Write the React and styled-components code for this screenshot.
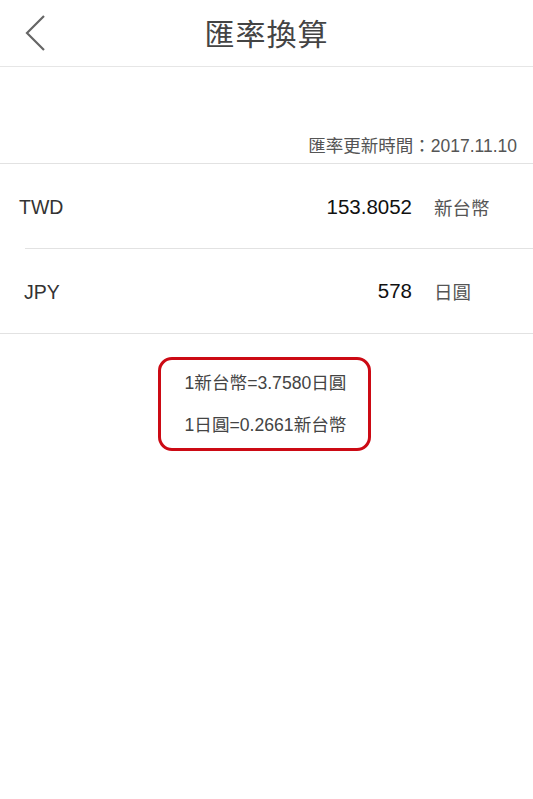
import React from "react";
import styled, { createGlobalStyle } from "styled-components";

const Global = createGlobalStyle`
  html, body { margin: 0; padding: 0; background: #fff; }
  body { font-family: "Liberation Sans", "Noto Sans CJK TC", sans-serif; }
`;

const Page = styled.div`
  width: 533px;
  min-height: 799px;
  background: #fff;
  display: flex;
  flex-direction: column;
`;

const Header = styled.header`
  height: 67px;
  box-sizing: border-box;
  border-bottom: 1px solid #e6e6e6;
  display: grid;
  grid-template-columns: 80px 1fr 80px;
  align-items: center;
`;

const Back = styled.button`
  border: 0;
  background: none;
  padding: 0 0 0 24px;
  height: 40px;
  display: flex;
  align-items: center;
  justify-self: start;
`;

const Title = styled.h1`
  margin: 0;
  text-align: center;
  font-size: 30px;
  font-weight: 400;
  color: #444;
  letter-spacing: 1px;
  padding-bottom: 2px;
`;

const UpdateBar = styled.div`
  height: 97px;
  box-sizing: border-box;
  border-bottom: 1px solid #e2e2e2;
  display: flex;
  align-items: flex-end;
  justify-content: flex-end;
  padding: 0 16px 6px 0;
  font-size: 17.5px;
  color: #555;
`;

const Row = styled.div`
  height: 85px;
  box-sizing: border-box;
  display: flex;
  align-items: center;
  padding-left: ${(p) => p.$pad}px;
  position: relative;
  border-bottom: ${(p) => (p.$inset ? "none" : "1px solid #e2e2e2")};
  &::after {
    content: "";
    display: ${(p) => (p.$inset ? "block" : "none")};
    position: absolute;
    left: 25px;
    right: 0;
    bottom: 0;
    height: 1px;
    background: #e2e2e2;
  }
`;

const Code = styled.span`
  flex: 1;
  font-size: 19.5px;
  color: #333;
  padding-top: 2px;
`;

const Amount = styled.span`
  font-size: 20.5px;
  color: #111;
  margin-right: 22px;
`;

const Unit = styled.span`
  width: 99px;
  font-size: 18.5px;
  color: #555;
`;

const RateBox = styled.div`
  align-self: center;
  margin-top: 23px;
  margin-right: 4px;
  width: 213px;
  height: 94px;
  box-sizing: border-box;
  border: 3.5px solid #cc0a14;
  border-radius: 14px;
  display: flex;
  flex-direction: column;
  align-items: center;
  justify-content: center;
  gap: 21px;
  font-size: 17.6px;
  color: #444;
  padding-left: 2px;
`;

const Line = styled.div`
  line-height: 21px;
`;

export default function App() {
  return (
    <Page>
      <Global />
      <Header>
        <Back aria-label="back">
          <svg width="22" height="38" viewBox="0 0 22 38">
            <path d="M20 2 L3 19 L20 36" fill="none" stroke="#666" strokeWidth="2.2" />
          </svg>
        </Back>
        <Title>匯率換算</Title>
        <div />
      </Header>
      <UpdateBar>匯率更新時間：2017.11.10</UpdateBar>
      <Row $pad={19} $inset>
        <Code>TWD</Code>
        <Amount>153.8052</Amount>
        <Unit>新台幣</Unit>
      </Row>
      <Row $pad={24}>
        <Code>JPY</Code>
        <Amount>578</Amount>
        <Unit>日圓</Unit>
      </Row>
      <RateBox>
        <Line>1新台幣=3.7580日圓</Line>
        <Line>1日圓=0.2661新台幣</Line>
      </RateBox>
    </Page>
  );
}
